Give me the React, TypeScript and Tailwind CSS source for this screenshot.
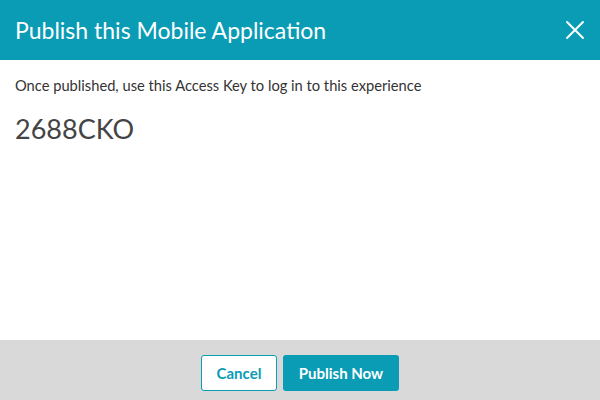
import { X } from 'lucide-react'

export default function App() {
  return (
    <div className="w-[600px] h-[400px] flex flex-col bg-white font-['Lato',sans-serif]">
      <header className="h-[60px] flex items-center justify-between bg-[#0a9bb5] pl-[15px] pr-[9px]">
        <h1 className="text-[23px] text-white leading-none">Publish this Mobile Application</h1>
        <X className="w-[32px] h-[32px] text-white" strokeWidth={1.4} />
      </header>

      <main className="flex-1 px-[15px] pt-[15px] text-[#333]">
        <p className="text-[14.7px] leading-[20px]">Once published, use this Access Key to log in to this experience</p>
        <p className="mt-[18px] text-[27px] leading-[32px] text-[#444]">2688CKO</p>
      </main>

      <footer className="h-[60px] flex items-start justify-center gap-[6px] bg-[#d9d9d9] pt-[15px]">
        <button className="h-[36px] w-[76px] rounded-[3px] border border-[#0a9bb5] bg-white text-[15px] font-bold text-[#0a9bb5]">
          Cancel
        </button>
        <button className="h-[36px] w-[116px] rounded-[3px] bg-[#0a9bb5] text-[15px] font-bold text-white">
          Publish Now
        </button>
      </footer>
    </div>
  )
}
